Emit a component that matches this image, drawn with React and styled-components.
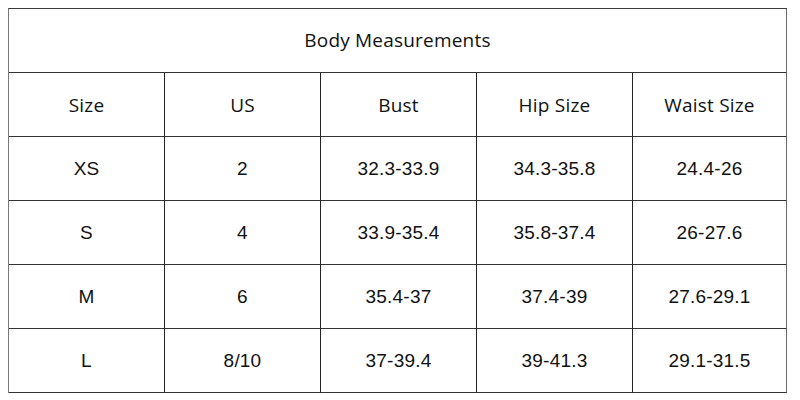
import React from 'react';
import styled, { createGlobalStyle } from 'styled-components';

const GlobalStyle = createGlobalStyle`
    body {
        margin: 0;
        background: #ffffff;
        font-family: "Open Sans", "Liberation Sans", sans-serif;
    }
`;

const Page = styled.div`
    padding: 8px;
`;

const Table = styled.div`
    display: grid;
    grid-template-columns: 156px 156px 156px 156px 154px;
    grid-auto-rows: 64px;
    border-top: 1px solid #3a3a3a;
    border-left: 1px solid #7a7a7a;
    width: max-content;
`;

const Cell = styled.div`
    display: flex;
    align-items: center;
    justify-content: center;
    border-right: 1px solid ${p => (p.$last ? '#6a6a6a' : '#222')};
    border-bottom: 1px solid #333;
    font-family: ${p => (p.$data
        ? '"Liberation Sans", Arial, sans-serif'
        : '"Open Sans", "Liberation Sans", sans-serif')};
    font-size: 19px;
    color: #111;
    letter-spacing: ${p => (p.$data ? '0.2px' : '0.2px')};
`;

const Title = styled(Cell)`
    grid-column: 1 / -1;
    padding-bottom: 2px;
`;

const headers = ['Size', 'US', 'Bust', 'Hip Size', 'Waist Size'];

const rows = [
    ['XS', '2', '32.3-33.9', '34.3-35.8', '24.4-26'],
    ['S', '4', '33.9-35.4', '35.8-37.4', '26-27.6'],
    ['M', '6', '35.4-37', '37.4-39', '27.6-29.1'],
    ['L', '8/10', '37-39.4', '39-41.3', '29.1-31.5'],
];

export default function App() {
    return (
        <Page>
            <GlobalStyle />
            <Table>
                <Title $last>Body Measurements</Title>
                {headers.map((h, i) => (
                    <Cell key={h} $last={i === 4}>{h}</Cell>
                ))}
                {rows.map(r =>
                    r.map((v, i) => (
                        <Cell key={r[0] + i} $data $last={i === 4}>{v}</Cell>
                    ))
                )}
            </Table>
        </Page>
    );
}
